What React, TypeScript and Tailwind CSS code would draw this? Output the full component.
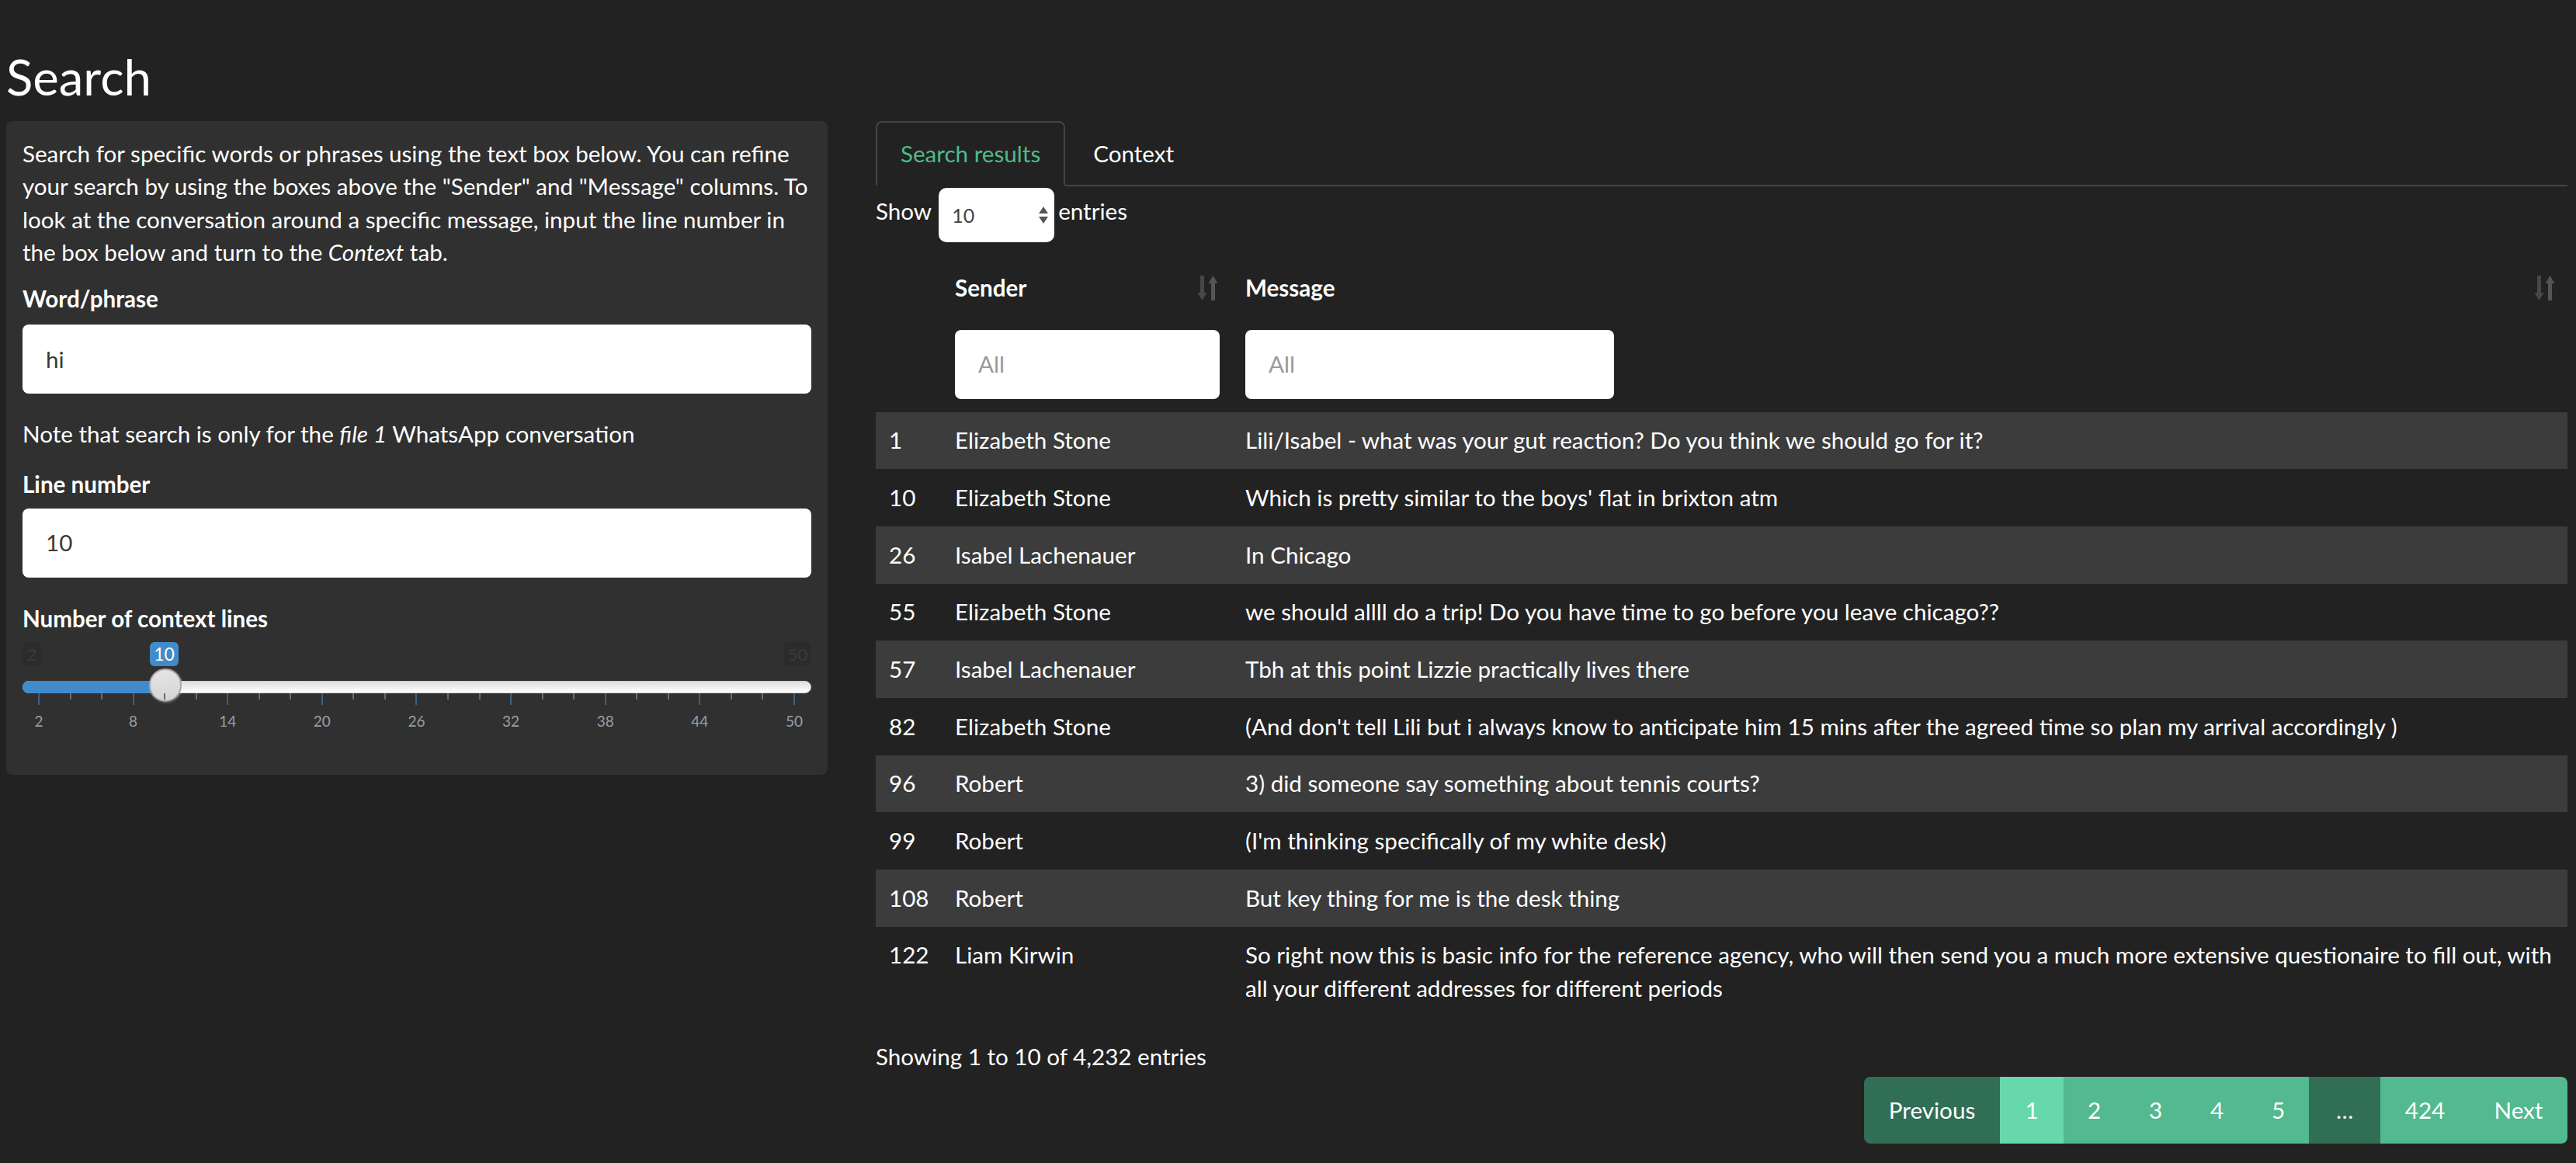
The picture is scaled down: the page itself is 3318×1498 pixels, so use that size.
const rows: { n: number; s: string; m: string[] }[] = [
  { n: 1, s: "Elizabeth Stone", m: ["Lili/Isabel - what was your gut reaction? Do you think we should go for it?"] },
  { n: 10, s: "Elizabeth Stone", m: ["Which is pretty similar to the boys' flat in brixton atm"] },
  { n: 26, s: "Isabel Lachenauer", m: ["In Chicago"] },
  { n: 55, s: "Elizabeth Stone", m: ["we should allll do a trip! Do you have time to go before you leave chicago??"] },
  { n: 57, s: "Isabel Lachenauer", m: ["Tbh at this point Lizzie practically lives there"] },
  { n: 82, s: "Elizabeth Stone", m: ["(And don't tell Lili but i always know to anticipate him 15 mins after the agreed time so plan my arrival accordingly )"] },
  { n: 96, s: "Robert", m: ["3) did someone say something about tennis courts?"] },
  { n: 99, s: "Robert", m: ["(I'm thinking specifically of my white desk)"] },
  { n: 108, s: "Robert", m: ["But key thing for me is the desk thing"] },
  {
    n: 122,
    s: "Liam Kirwin",
    m: [
      "So right now this is basic info for the reference agency, who will then send you a much more extensive questionaire to fill out, with",
      "all your different addresses for different periods",
    ],
  },
];

const pages = [
  { t: "Previous", w: "w-[175px]", bg: "bg-[#306e56]" },
  { t: "1", w: "w-[82px]", bg: "bg-[#66d8aa]" },
  { t: "2", w: "w-[79px]", bg: "bg-[#53b98f]" },
  { t: "3", w: "w-[79px]", bg: "bg-[#53b98f]" },
  { t: "4", w: "w-[79px]", bg: "bg-[#53b98f]" },
  { t: "5", w: "w-[79px]", bg: "bg-[#53b98f]" },
  { t: "…", w: "w-[92px]", bg: "bg-[#306e56]" },
  { t: "424", w: "w-[115px]", bg: "bg-[#53b98f]" },
  { t: "Next", w: "w-[126px]", bg: "bg-[#53b98f]" },
];

function SortIcon() {
  return (
    <svg width="31" height="32" viewBox="0 0 31 32" className="shrink-0">
      <rect x="6" y="0" width="5" height="24" fill="#474747" />
      <polygon points="2.5,22 14.5,22 8.5,32" fill="#474747" />
      <rect x="20" y="8" width="5" height="24" fill="#555" />
      <polygon points="16.5,10 28.5,10 22.5,0" fill="#555" />
    </svg>
  );
}

function Slider() {
  const ticks = Array.from({ length: 25 }, (_, j) => j);
  return (
    <div className="relative h-[156px] mt-[3px]">
      <div className="absolute left-0 top-[6px] h-[31px] w-[24px] rounded-[6px] bg-black/10 text-[#3a3a3a] text-[22px] leading-[31px] text-center">
        2
      </div>
      <div className="absolute right-0 top-[6px] h-[31px] w-[35px] rounded-[6px] bg-black/10 text-[#3a3a3a] text-[22px] leading-[31px] text-center">
        50
      </div>
      <div className="absolute left-[164px] top-[6px] h-[31px] w-[37px] rounded-[6px] bg-[#428bca] text-white text-[23px] leading-[31px] text-center">
        10
      </div>
      <div className="absolute left-0 right-0 top-[56px] h-[16px] rounded-full border border-[#cfcfcf] bg-gradient-to-b from-[#dedede] to-white" />
      <div className="absolute left-0 w-[186px] top-[56px] h-[16px] rounded-l-full bg-[#428bca]" />
      <div className="absolute left-[163px] top-[40px] h-[43px] w-[42px] rounded-full border-2 border-[#a8a8a8] bg-gradient-to-b from-[#e4e4e4] to-[#d6d6d6] shadow-[1px_1px_3px_rgba(255,255,255,0.3)]" />
      {ticks.map((j) => (
        <div
          key={j}
          className={j % 3 === 0 ? "absolute top-[72px] h-[15px] w-[2px] bg-[#3f5f80]" : "absolute top-[72px] h-[8px] w-[2px] bg-[#6a6a6a]"}
          style={{ left: 20 + j * 40.54 }}
        />
      ))}
      {ticks
        .filter((j) => j % 3 === 0)
        .map((j) => (
          <div
            key={"l" + j}
            className="absolute top-[98px] -translate-x-1/2 text-[19px] leading-[19px] text-[#95a0aa]"
            style={{ left: 21 + j * 40.54 }}
          >
            {2 + j * 2}
          </div>
        ))}
    </div>
  );
}

export default function App() {
  return (
    <div className="min-h-screen bg-[#222222] text-white font-['Lato',sans-serif] text-[29.6px] leading-[42.3px] pl-[8px] pr-[11px]">
      <h2 className="pt-[64px] pb-[22px] text-[63.5px] leading-[70px] font-normal">Search</h2>
      <div className="flex items-start gap-[62px]">
        <aside className="w-[1058px] shrink-0 rounded-[8px] bg-[#303030] p-[21px]">
          <p className="mb-[18px] whitespace-nowrap">
            Search for specific words or phrases using the text box below. You can refine
            <br />
            your search by using the boxes above the "Sender" and "Message" columns. To
            <br />
            look at the conversation around a specific message, input the line number in
            <br />
            the box below and turn to the <i>Context</i> tab.
          </p>
          <label className="block font-bold mb-[12px]">Word/phrase</label>
          <div className="h-[89px] rounded-[8px] bg-white px-[30px] flex items-center text-[#3a3a3a]">hi</div>
          <p className="mt-[31px]">
            Note that search is only for the <i>file 1</i> WhatsApp conversation
          </p>
          <label className="block font-bold mt-[22px] mb-[10px]">Line number</label>
          <div className="h-[89px] rounded-[8px] bg-white px-[30px] flex items-center text-[#3a3a3a]">10</div>
          <label className="block font-bold mt-[32px]">Number of context lines</label>
          <Slider />
        </aside>

        <main className="flex-1 min-w-0">
          <div className="flex border-b-2 border-[#444]">
            <div className="-mb-[2px] rounded-t-[8px] border-2 border-[#444] border-b-[#222222] bg-[#222222] px-[30px] py-[19px] text-[#4fbb8b]">
              Search results
            </div>
            <div className="-mb-[2px] ml-[4px] border-2 border-transparent px-[30px] py-[19px]">Context</div>
          </div>

          <div className="mt-[2px] flex items-start">
            <span className="mt-[9px]">Show</span>
            <div className="ml-[9px] h-[70px] w-[149px] rounded-[10px] bg-white flex items-center justify-between pl-[17px] pr-[8px] text-[25px] text-[#444]">
              <span>10</span>
              <svg width="12" height="22" viewBox="0 0 12 22">
                <polygon points="6,0 12,9 0,9" fill="#555" />
                <polygon points="0,13 12,13 6,22" fill="#555" />
              </svg>
            </div>
            <span className="ml-[5px] mt-[9px]">entries</span>
          </div>

          <table className="mt-[21px] w-full table-fixed border-collapse">
            <colgroup>
              <col className="w-[85px]" />
              <col className="w-[375px]" />
              <col />
            </colgroup>
            <thead>
              <tr>
                <th className="px-[17px] py-[17px]" />
                <th className="px-[17px] py-[17px] text-left font-bold">
                  <div className="flex items-center justify-between">
                    <span>Sender</span>
                    <SortIcon />
                  </div>
                </th>
                <th className="pl-[16px] pr-[14px] py-[17px] text-left font-bold">
                  <div className="flex items-center justify-between">
                    <span>Message</span>
                    <SortIcon />
                  </div>
                </th>
              </tr>
              <tr>
                <th className="pt-[15px] pb-[17px]" />
                <th className="px-[17px] pt-[15px] pb-[17px] text-left font-normal">
                  <div className="h-[89px] rounded-[8px] bg-white px-[30px] flex items-center text-[#999]">All</div>
                </th>
                <th className="pl-[16px] pt-[15px] pb-[17px] text-left font-normal">
                  <div className="h-[89px] w-[475px] rounded-[8px] bg-white px-[30px] flex items-center text-[#999]">All</div>
                </th>
              </tr>
            </thead>
            <tbody>
              {rows.map((r, i) => (
                <tr key={r.n} className={i % 2 === 0 ? "bg-[#3c3c3c]" : ""}>
                  <td className="px-[17px] py-[15.7px] align-top">{r.n}</td>
                  <td className="px-[17px] py-[15.7px] align-top">{r.s}</td>
                  <td className="pl-[16px] pr-[14px] py-[15.7px] align-top whitespace-nowrap">
                    {r.m.map((line, k) => (
                      <div key={k}>{line}</div>
                    ))}
                  </td>
                </tr>
              ))}
            </tbody>
          </table>

          <div className="mt-[30px]">Showing 1 to 10 of 4,232 entries</div>

          <div className="mt-[5px] flex justify-end">
            <div className="flex h-[86px] overflow-hidden rounded-[8px]">
              {pages.map((p) => (
                <div key={p.t} className={`${p.w} ${p.bg} flex items-center justify-center text-white`}>
                  {p.t}
                </div>
              ))}
            </div>
          </div>
        </main>
      </div>
    </div>
  );
}
